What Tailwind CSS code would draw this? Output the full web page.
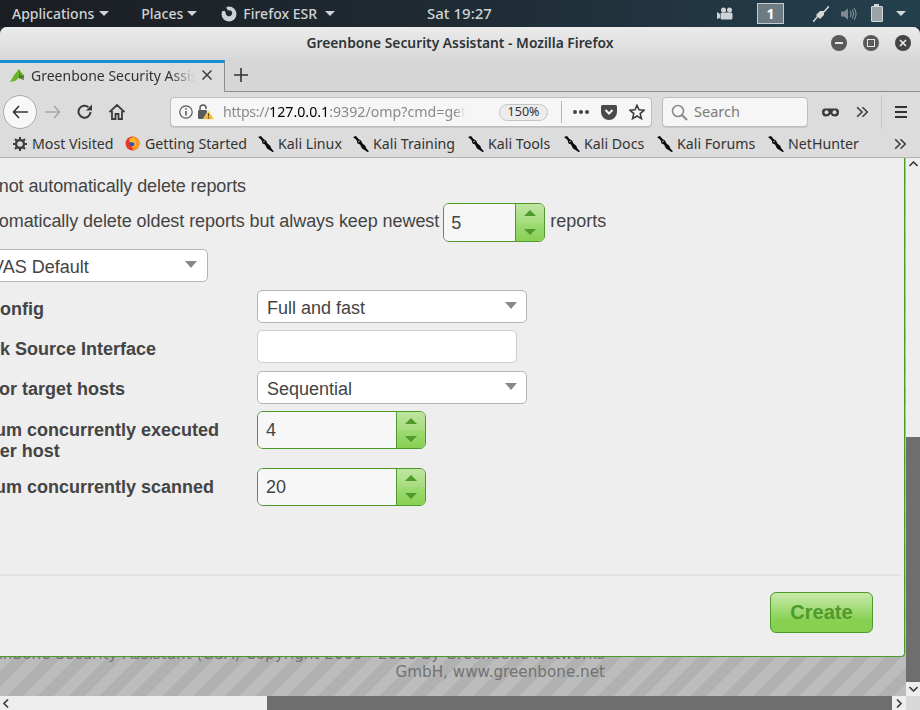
<!DOCTYPE html>
<html lang="en">

<head>
    <meta charset="UTF-8">
    <title>Greenbone Security Assistant - Mozilla Firefox</title>
    <script src="https://cdn.jsdelivr.net/npm/@tailwindcss/browser@4"></script>
</head>

<body class="w-[920px] h-[710px] overflow-hidden flex flex-col bg-[#1e2a33] font-['Noto_Sans',sans-serif]">
    <svg class="hidden">
        <symbol id="kali" viewBox="0 0 16 16">
            <path d="M0 1 L3 0 L5.5 3 L8 4.5 L9.5 7.5 L12.5 10 L13 12 L16 15.5 L14.5 16 L11.5 14 L9 12.5 L7 8.5 L4.5 7.5 L3.5 4 Z" fill="#0a0a0a" />
            <path d="M5 6 L7 5" stroke="#dcdcdc" stroke-width=".7" />
        </symbol>
        <symbol id="chev" viewBox="0 0 16 16">
            <path d="M2.5 2.5 L8 8 L2.5 13.5 M8.5 2.5 L14 8 L8.5 13.5" stroke="#3d3d3d" stroke-width="1.8" fill="none" />
        </symbol>
        <symbol id="fox" viewBox="0 0 16 16">
            <circle cx="8" cy="8" r="7.5" fill="#e8372c" />
            <path d="M8 .5 A7.5 7.5 0 0 1 15.5 8 A7.5 7.5 0 0 1 9 15.4 L6 9 Z" fill="#ff9a1f" />
            <circle cx="8.5" cy="7.5" r="3.8" fill="#3a4fb8" />
            <path d="M5 2.5 C8 1 12.5 3 12.5 7.5 C12.5 11 9.5 12.5 7 11.5 C9.5 11 10.5 9.5 10 8 C9 6 6 7.5 4.5 6 Z" fill="#ffb52a" />
        </symbol>
    </svg>

    <!-- gnome top bar -->
    <div class="h-[27px] shrink-0 flex items-center text-[14px] font-medium text-[#cfd3d5] bg-gradient-to-r from-[#1b1e22] via-[#1f2b34] to-[#24404f]">
        <span class="ml-[12px]">Applications</span>
        <span class="ml-[5px] w-0 h-0 border-x-[5px] border-x-transparent border-t-[5px] border-t-[#cfd3d5]"></span>
        <span class="ml-[32px]">Places</span>
        <span class="ml-[4px] w-0 h-0 border-x-[5px] border-x-transparent border-t-[5px] border-t-[#cfd3d5]"></span>
        <svg class="ml-[24px] w-[16px] h-[16px]" viewBox="0 0 16 16">
            <circle cx="8" cy="8" r="7.5" fill="#cfd3d5" />
            <path d="M6 1 C5 3 7 4.5 9 4.5 C11 4.5 12 7 10.5 9 C9 11 6 10.5 5 8.5 L4 5 L1 5 L1 2 Z" fill="#1f2b34" />
        </svg>
        <span class="ml-[6px]">Firefox ESR</span>
        <span class="ml-[8px] w-0 h-0 border-x-[5px] border-x-transparent border-t-[5px] border-t-[#cfd3d5]"></span>
        <span class="ml-[92px] text-[15px]">Sat 19:27</span>
        <svg class="ml-[225px] w-[16px] h-[14px]" viewBox="0 0 16 14">
            <path d="M0 5 L3 7 L3 11 L0 12 Z" fill="#cfd3d5" />
            <rect x="3.5" y="5.5" width="12" height="7" rx="1.5" fill="#cfd3d5" />
            <circle cx="6.5" cy="3" r="2.5" fill="#cfd3d5" />
            <circle cx="12.5" cy="3" r="2.5" fill="#cfd3d5" />
        </svg>
        <span class="ml-[24px] w-[27px] h-[21px] flex items-center justify-center bg-[#6f7b82] border border-[#c5cacc] text-white text-[14px] font-bold">1</span>
        <svg class="ml-[29px] w-[16px] h-[16px]" viewBox="0 0 16 16">
            <path d="M0 16 L5 10 M11 6 L16 0" stroke="#d4d7d8" stroke-width="1.5" />
            <path d="M3 9 L7 5 L11 5 L11 9 L7 13 Z" fill="#d4d7d8" />
        </svg>
        <svg class="ml-[12px] w-[16px] h-[16px]" viewBox="0 0 16 16">
            <path d="M0 5.5 H3 L7 2.5 V13.5 L3 10.5 H0 Z" fill="#7e8a90" />
            <path d="M9 5 Q11 8 9 11 M11 3.5 Q14 8 11 12.5 M13 2 Q17 8 13 14" stroke="#7e8a90" stroke-width="1.2" fill="none" />
        </svg>
        <span class="relative ml-[14px] w-[12px] h-[16px] bg-[#9aa3a7] border-[1.5px] border-[#d4d7d8] rounded-[1px]">
            <span class="absolute -top-[3px] left-[2px] w-[5px] h-[2px] bg-[#d4d7d8]"></span>
        </span>
        <span class="ml-[13px] w-0 h-0 border-x-[5px] border-x-transparent border-t-[5px] border-t-[#d4d7d8]"></span>
    </div>

    <!-- firefox window -->
    <div class="flex-1 flex flex-col min-h-0 rounded-t-[7px] overflow-hidden bg-[#dcdcdc]">
        <div class="relative h-[33px] shrink-0 flex items-center justify-center bg-gradient-to-b from-[#ebebeb] to-[#d8d8d8] text-[13.8px] font-semibold text-[#2e3436]">
            <span class="pb-[1px]">Greenbone Security Assistant - Mozilla Firefox</span>
            <div class="absolute right-[9px] top-[8px] flex gap-[16px]">
                <span class="w-[16px] h-[16px] rounded-full bg-[#5a5a5a] flex items-center justify-center">
                    <span class="w-[8px] h-[2px] bg-[#e6e6e6]"></span>
                </span>
                <span class="w-[16px] h-[16px] rounded-full bg-[#5a5a5a] flex items-center justify-center">
                    <span class="w-[8px] h-[8px] border-[1.5px] border-[#e6e6e6]"></span>
                </span>
                <span class="w-[16px] h-[16px] rounded-full bg-[#444] flex items-center justify-center">
                    <svg class="w-[8px] h-[8px]" viewBox="0 0 8 8"><path d="M1 1 L7 7 M7 1 L1 7" stroke="#eee" stroke-width="1.6" /></svg>
                </span>
            </div>
        </div>

        <!-- tab strip -->
        <div class="h-[32px] shrink-0 flex bg-[#d6d6d6]">
            <div class="w-[225px] h-full flex items-center pb-[5px] bg-[#dcdcdc] border-t-[3px] border-t-[#1a8fd1] border-r border-r-[#8c8c8c] overflow-hidden">
                <svg class="ml-[10px] w-[15px] h-[15px] shrink-0" viewBox="0 0 15 15">
                    <path d="M0 14 L4 7 L9 1 L11 4 L14 7 L14 12 L9 10 L5 13 Z" fill="#6bb52a" />
                    <path d="M9 1 L10 7 L14 8 L14 12 L9 10 Z" fill="#3f7d1b" />
                    <path d="M11 9 L14 10 L14 12 Z" fill="#999" />
                </svg>
                <span class="ml-[6px] w-[164px] shrink-0 whitespace-nowrap overflow-hidden text-[14px] text-[#333] [mask-image:linear-gradient(to_right,black_85%,transparent)]">Greenbone Security Assistant</span>
                <svg class="ml-[7px] w-[10px] h-[10px] shrink-0" viewBox="0 0 10 10"><path d="M.5 .5 L9.5 9.5 M9.5 .5 L.5 9.5" stroke="#3d3d3d" stroke-width="1.5" /></svg>
            </div>
            <div class="flex-1 border-b border-b-[#8c8c8c] flex items-center pl-[9px] pb-[2px]">
                <svg class="w-[14px] h-[14px]" viewBox="0 0 14 14"><path d="M7 0 V14 M0 7 H14" stroke="#333" stroke-width="1.6" /></svg>
            </div>
        </div>

        <!-- nav bar -->
        <div class="h-[38px] shrink-0 pt-[2px] flex items-center bg-[#dcdcdc]">
            <span class="ml-[3px] w-[34px] h-[34px] rounded-full bg-[#f8f8f8] border border-[#a8a8a8] flex items-center justify-center">
                <svg class="w-[16px] h-[14px]" viewBox="0 0 16 14"><path d="M7 1 L1.5 7 L7 13 M1.5 7 H16" stroke="#333" stroke-width="1.6" fill="none" /></svg>
            </span>
            <svg class="ml-[8px] w-[16px] h-[14px]" viewBox="0 0 16 14"><path d="M9 1 L14.5 7 L9 13 M14.5 7 H0" stroke="#a6a6a6" stroke-width="1.6" fill="none" /></svg>
            <svg class="ml-[16px] w-[16px] h-[16px]" viewBox="0 0 16 16"><path d="M13.5 8 A6 6 0 1 1 11.5 3.2" stroke="#3a3a3a" stroke-width="2" fill="none" /><path d="M15 .5 V6.5 H9 Z" fill="#3a3a3a" /></svg>
            <svg class="ml-[16px] w-[16px] h-[16px]" viewBox="0 0 16 16"><path d="M.5 8 L8 1 L15.5 8 M3 7 V15 H6.5 V10 H9.5 V15 H13 V7" stroke="#3a3a3a" stroke-width="1.8" fill="none" /></svg>

            <div class="ml-[45px] w-[482px] h-[30px] flex items-center bg-[#f6f6f6] border border-[#bdbdbd] rounded-[4px] shadow-[0_1px_0_#c8c8c8]">
                <svg class="ml-[8px] w-[14px] h-[14px] shrink-0" viewBox="0 0 14 14"><circle cx="7" cy="7" r="6.2" stroke="#555" stroke-width="1.2" fill="none" /><path d="M7 6 V10.5 M7 3.3 V4.8" stroke="#555" stroke-width="1.5" /></svg>
                <svg class="ml-[5px] w-[16px] h-[16px] shrink-0" viewBox="0 0 16 16">
                    <rect x="0" y="6" width="9" height="9" rx="1.2" fill="#5a5a5a" />
                    <path d="M2 6 V4 A3 3 0 0 1 8 4 V5" stroke="#5a5a5a" stroke-width="1.5" fill="none" />
                    <path d="M10.5 6.5 L16 15.5 H5 Z" fill="#f5b82e" stroke="#f6f6f6" stroke-width=".6" />
                    <path d="M10.5 9.5 V12.5 M10.5 13.2 V14.5" stroke="#5a4300" stroke-width="1" />
                </svg>
                <span class="ml-[9px] w-[242px] shrink-0 whitespace-nowrap overflow-hidden text-[14.2px] text-[#8a8a8a] [mask-image:linear-gradient(to_right,black_96%,transparent)]"><span class="tracking-[-0.35px]">https://</span><span class="text-black">127.0.0.1</span>:9392/omp?cmd=get_tasks</span>
                <span class="ml-[34px] w-[49px] h-[17px] rounded-full border border-[#c4c4c4] bg-[#ececec] flex items-center justify-center text-[12.5px] text-[#333]">150%</span>
                <span class="ml-[13px] w-[1px] h-[22px] bg-[#b5b5b5]"></span>
                <span class="ml-[11px] flex gap-[2px]">
                    <span class="w-[4px] h-[4px] rounded-full bg-[#444]"></span>
                    <span class="w-[4px] h-[4px] rounded-full bg-[#444]"></span>
                    <span class="w-[4px] h-[4px] rounded-full bg-[#444]"></span>
                </span>
                <svg class="ml-[12px] w-[16px] h-[15px]" viewBox="0 0 16 15"><path d="M1.5 0 H14.5 Q16 0 16 1.5 V7 A8 8 0 0 1 0 7 V1.5 Q0 0 1.5 0 Z" fill="#4a4a4a" /><path d="M4.5 5 L8 8.5 L11.5 5" stroke="#f6f6f6" stroke-width="2" fill="none" /></svg>
                <svg class="ml-[12px] w-[16px] h-[16px]" viewBox="0 0 16 16"><path d="M8 1.2 L10 5.8 L15 6.3 L11.2 9.6 L12.4 14.6 L8 12 L3.6 14.6 L4.8 9.6 L1 6.3 L6 5.8 Z" stroke="#3d3d3d" stroke-width="1.6" fill="none" /></svg>
            </div>

            <div class="ml-[10px] w-[146px] h-[30px] flex items-center bg-[#f6f6f6] border border-[#bdbdbd] rounded-[4px] shadow-[0_1px_0_#c8c8c8]">
                <svg class="ml-[8px] w-[17px] h-[17px]" viewBox="0 0 17 17"><circle cx="7" cy="7" r="5.5" stroke="#8a8a8a" stroke-width="1.6" fill="none" /><path d="M11 11 L16 16" stroke="#8a8a8a" stroke-width="2" /></svg>
                <span class="ml-[6px] text-[14.5px] text-[#7a7a7a]">Search</span>
            </div>
            <svg class="ml-[14px] w-[17px] h-[9px]" viewBox="0 0 17 9"><path d="M3 .5 H14 Q17 .5 17 4 Q17 8.5 13 8.5 Q10 8.5 8.5 6 Q7 8.5 4 8.5 Q0 8.5 0 4 Q0 .5 3 .5 Z" fill="#3a3a3a" /><circle cx="4.5" cy="4.3" r="2" fill="#dcdcdc" /><circle cx="12.5" cy="4.3" r="2" fill="#dcdcdc" /></svg>
            <svg class="ml-[16px] w-[14px] h-[14px]"><use href="#chev" /></svg>
            <span class="ml-[12px] w-[1px] h-[34px] bg-[#c4c4c4]"></span>
            <span class="ml-[13px] w-[12px] flex flex-col gap-[3px]">
                <span class="h-[2px] bg-[#333]"></span>
                <span class="h-[2px] bg-[#333]"></span>
                <span class="h-[2px] bg-[#333]"></span>
            </span>
        </div>

        <!-- bookmarks bar -->
        <div class="h-[28px] shrink-0 flex items-center bg-[#dcdcdc] border-b border-b-[#b4b4b4] text-[14.2px] text-[#333] whitespace-nowrap">
            <svg class="ml-[13px] w-[14px] h-[14px] shrink-0" viewBox="0 0 14 14"><circle cx="7" cy="7" r="4" stroke="#3d3d3d" stroke-width="2.4" fill="none" /><path d="M7 0 V3 M7 11 V14 M0 7 H3 M11 7 H14 M2 2 L4 4 M10 10 L12 12 M12 2 L10 4 M4 10 L2 12" stroke="#3d3d3d" stroke-width="2" /></svg>
            <span class="ml-[5px] w-[81px]">Most Visited</span>
            <svg class="ml-[12px] w-[15px] h-[15px] shrink-0"><use href="#fox" /></svg>
            <span class="ml-[5px] w-[101px]">Getting Started</span>
            <svg class="ml-[12px] w-[16px] h-[16px] shrink-0"><use href="#kali" /></svg>
            <span class="ml-[4px] w-[63px]">Kali Linux</span>
            <svg class="ml-[12px] w-[16px] h-[16px] shrink-0"><use href="#kali" /></svg>
            <span class="ml-[4px] w-[83px]">Kali Training</span>
            <svg class="ml-[12px] w-[16px] h-[16px] shrink-0"><use href="#kali" /></svg>
            <span class="ml-[4px] w-[64px]">Kali Tools</span>
            <svg class="ml-[12px] w-[16px] h-[16px] shrink-0"><use href="#kali" /></svg>
            <span class="ml-[4px] w-[61px]">Kali Docs</span>
            <svg class="ml-[12px] w-[16px] h-[16px] shrink-0"><use href="#kali" /></svg>
            <span class="ml-[4px] w-[79px]">Kali Forums</span>
            <svg class="ml-[12px] w-[16px] h-[16px] shrink-0"><use href="#kali" /></svg>
            <span class="ml-[4px] w-[70px]">NetHunter</span>
            <svg class="ml-[35px] w-[14px] h-[14px] shrink-0"><use href="#chev" /></svg>
        </div>

        <!-- page + scrollbars -->
        <div class="flex-1 min-h-0 flex flex-col font-['Liberation_Sans',sans-serif]">
            <div class="flex-1 min-h-0 flex">
                <div class="w-[906px] h-[538px] overflow-hidden bg-[repeating-linear-gradient(135deg,#bcbcbc_0,#bcbcbc_11px,#b1b1b1_11px,#b1b1b1_22px)]">
                    <div class="relative z-10 -ml-[80px] w-[985px] h-[499px] flex flex-col bg-[#eeeeee] border-r border-b border-[#4f9a2b] rounded-br-[4px] text-[18px] text-[#444]">
                        <div class="pl-[51px] pt-[14px] h-[42px] leading-[28px] tracking-[-0.09px]">Do not automatically delete reports</div>
                        <div class="pl-[52px] mt-[3px] flex items-center h-[39px]">
                            <span class="mr-[4px] pb-[2px] tracking-[-0.07px]">Automatically delete oldest reports but always keep newest</span>
                            <div class="flex w-[102px] h-[39px] border border-[#4f9a2b] rounded-[6px] overflow-hidden">
                                <span class="w-[72px] bg-[#f7f7f7] pl-[7px] pt-[1px] flex items-center border-r border-r-[#4f9a2b]">5</span>
                                <span class="flex-1 flex flex-col">
                                    <span class="flex-1 flex items-center justify-center bg-gradient-to-b from-[#bfe5a0] to-[#a6dc7e]"><span class="w-0 h-0 border-x-[6px] border-x-transparent border-b-[6px] border-b-[#4f9a2b]"></span></span>
                                    <span class="flex-1 flex items-center justify-center bg-gradient-to-b from-[#9fdb75] to-[#87d050]"><span class="w-0 h-0 border-x-[6px] border-x-transparent border-t-[6px] border-t-[#4f9a2b]"></span></span>
                                </span>
                            </div>
                            <span class="ml-[5px] pb-[2px]">reports</span>
                        </div>
                        <div class="ml-[22px] mt-[7px] w-[266px] h-[33px] relative bg-white border border-[#b4b4b4] rounded-[5px] pl-[5px] pt-[2px] leading-[30px]">OpenVAS Default
                            <span class="absolute right-[10px] top-[11px] w-0 h-0 border-x-[6px] border-x-transparent border-t-[7px] border-t-[#888]"></span>
                        </div>
                        <div class="pl-[19px] mt-[8px] grid grid-cols-[318px_auto] justify-start">
                            <div class="font-bold pt-[5px] leading-[28px] h-[40px]">Scan Config</div>
                            <div class="w-[270px] h-[33px] relative bg-white border border-[#b4b4b4] rounded-[5px] pl-[9px] pt-[2px] leading-[30px]">Full and fast
                                <span class="absolute right-[9px] top-[11px] w-0 h-0 border-x-[6px] border-x-transparent border-t-[7px] border-t-[#888]"></span>
                            </div>
                            <div class="font-bold pt-[5px] leading-[28px] h-[41px]">Network Source Interface</div>
                            <div class="w-[260px] h-[33px] bg-white border border-[#cdcdcd] rounded-[5px]"></div>
                            <div class="font-bold pt-[4px] leading-[28px] h-[40px]">Order for target hosts</div>
                            <div class="w-[270px] h-[33px] relative bg-white border border-[#b4b4b4] rounded-[5px] pl-[9px] pt-[2px] leading-[30px]">Sequential
                                <span class="absolute right-[9px] top-[11px] w-0 h-0 border-x-[6px] border-x-transparent border-t-[7px] border-t-[#888]"></span>
                            </div>
                            <div class="font-bold pt-[9px] leading-[21px] h-[57px] w-[290px]">Maximum concurrently executed NVTs per host</div>
                            <div class="flex w-[169px] h-[38px] border border-[#4f9a2b] rounded-[6px] overflow-hidden">
                                <span class="w-[139px] bg-[#f7f7f7] pl-[8px] flex items-center border-r border-r-[#4f9a2b]">4</span>
                                <span class="flex-1 flex flex-col">
                                    <span class="flex-1 flex items-center justify-center bg-gradient-to-b from-[#bfe5a0] to-[#a6dc7e]"><span class="w-0 h-0 border-x-[6px] border-x-transparent border-b-[6px] border-b-[#4f9a2b]"></span></span>
                                    <span class="flex-1 flex items-center justify-center bg-gradient-to-b from-[#9fdb75] to-[#87d050]"><span class="w-0 h-0 border-x-[6px] border-x-transparent border-t-[6px] border-t-[#4f9a2b]"></span></span>
                                </span>
                            </div>
                            <div class="font-bold pt-[5px] leading-[28px] h-[38px]">Maximum concurrently scanned</div>
                            <div class="flex w-[169px] h-[38px] border border-[#4f9a2b] rounded-[6px] overflow-hidden">
                                <span class="w-[139px] bg-[#f7f7f7] pl-[8px] flex items-center border-r border-r-[#4f9a2b]">20</span>
                                <span class="flex-1 flex flex-col">
                                    <span class="flex-1 flex items-center justify-center bg-gradient-to-b from-[#bfe5a0] to-[#a6dc7e]"><span class="w-0 h-0 border-x-[6px] border-x-transparent border-b-[6px] border-b-[#4f9a2b]"></span></span>
                                    <span class="flex-1 flex items-center justify-center bg-gradient-to-b from-[#9fdb75] to-[#87d050]"><span class="w-0 h-0 border-x-[6px] border-x-transparent border-t-[6px] border-t-[#4f9a2b]"></span></span>
                                </span>
                            </div>
                        </div>
                        <div class="mt-[68px] mr-[3px] border-t-2 border-t-[#e2e2e2]"></div>
                        <div class="mt-[16px] mr-[31px] self-end w-[103px] h-[41px] pb-[2px] flex items-center justify-center rounded-[6px] border border-[#4f9a2b] bg-gradient-to-b from-[#c9eaaa] to-[#87d050] to-70% text-[20px] font-bold text-[#4f9a2b]">Create</div>
                    </div>
                    <div class="-mt-[12px] w-[605px] flex flex-col items-end font-['DejaVu_Sans',sans-serif] text-[15.2px] leading-[18px] text-[#727272] whitespace-nowrap">
                        <span>Greenbone Security Assistant (GSA) Copyright 2009 - 2016 by Greenbone Networks</span>
                        <span>GmbH, www.greenbone.net</span>
                    </div>
                </div>
                <!-- vertical scrollbar -->
                <div class="w-[14px] h-[538px] flex flex-col bg-[#eeeeee]">
                    <div class="h-[279px] pt-[3px] flex justify-center">
                        <svg class="w-[9px] h-[6px]" viewBox="0 0 9 6"><path d="M.5 5 L4.5 1 L8.5 5" stroke="#3d3d3d" stroke-width="1.6" fill="none" /></svg>
                    </div>
                    <div class="h-[245px] bg-[#6e6e6e]"></div>
                    <div class="h-[14px] flex items-center justify-center">
                        <svg class="w-[9px] h-[6px]" viewBox="0 0 9 6"><path d="M.5 1 L4.5 5 L8.5 1" stroke="#3d3d3d" stroke-width="1.6" fill="none" /></svg>
                    </div>
                </div>
            </div>
            <!-- horizontal scrollbar -->
            <div class="h-[14px] shrink-0 flex">
                <div class="w-[267px] bg-[#eeeeee] pl-[3px] flex items-center">
                    <svg class="w-[6px] h-[9px]" viewBox="0 0 6 9"><path d="M5 .5 L1 4.5 L5 8.5" stroke="#3d3d3d" stroke-width="1.6" fill="none" /></svg>
                </div>
                <div class="w-[625px] bg-[#6e6e6e]"></div>
                <div class="w-[14px] bg-[#eeeeee] flex items-center justify-center">
                    <svg class="w-[6px] h-[9px]" viewBox="0 0 6 9"><path d="M1 .5 L5 4.5 L1 8.5" stroke="#3d3d3d" stroke-width="1.6" fill="none" /></svg>
                </div>
                <div class="w-[14px] bg-[#d8d8d8]"></div>
            </div>
        </div>
    </div>
</body>

</html>
